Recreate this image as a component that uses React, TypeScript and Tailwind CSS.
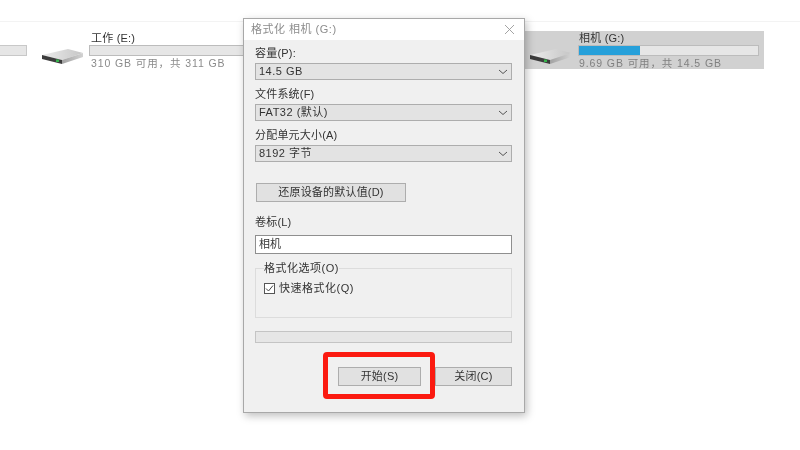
const sans = "font-['Liberation_Sans','Noto_Sans_CJK_SC',sans-serif]";

function DriveIcon() {
  return (
    <svg width="42" height="16" viewBox="0 0 42 16" className="shrink-0">
      <defs>
        <linearGradient id="top" x1="0" y1="0" x2="1" y2="0">
          <stop offset="0" stopColor="#ececec" />
          <stop offset="1" stopColor="#c6c6c6" />
        </linearGradient>
        <linearGradient id="side" x1="0" y1="0" x2="1" y2="0">
          <stop offset="0" stopColor="#a2a2a2" />
          <stop offset="1" stopColor="#d2d2d2" />
        </linearGradient>
      </defs>
      <polygon points="0,6 26,0 41,4 20,11" fill="url(#top)" />
      <polygon points="20,11 41,4 41,8 20,15" fill="url(#side)" />
      <polygon points="0,6 20,11 20,15 0,10" fill="#3c3c3c" />
      <rect x="14" y="10.5" width="3" height="2.5" fill="#35b34a" />
    </svg>
  );
}

function UsageBar({ width, percent }: { width: string; percent: number }) {
  return (
    <div className={`${width} h-[11px] border border-[#bcbcbc] bg-[#e6e6e6]`}>
      <div className="h-full bg-[#26a0da]" style={{ width: `${percent}%` }} />
    </div>
  );
}

function Combo({ label, value }: { label: string; value: string }) {
  return (
    <div className="flex flex-col">
      <div className="h-[18px] text-[11px] leading-[17px] tracking-[0.2px] text-[#333]">{label}</div>
      <div className="flex h-[17px] items-center justify-between border border-[#adadad] bg-[#e3e3e3] pl-[3px] pr-[3px] text-[11px] tracking-[0.5px] text-[#333]">
        <span>{value}</span>
        <svg width="10" height="6" viewBox="0 0 10 6" fill="none" stroke="#555" strokeWidth="1">
          <path d="M1 1l4 3.5L9 1" />
        </svg>
      </div>
    </div>
  );
}

function PushButton({ className, children }: { className: string; children: string }) {
  return (
    <div className={`flex h-[19px] items-center justify-center border border-[#adadad] bg-[#e1e1e1] text-[11px] tracking-[0.2px] text-[#333] ${className}`}>
      {children}
    </div>
  );
}

function FormatDialog() {
  return (
    <div className="absolute left-[243px] top-[18px] flex h-[395px] w-[282px] flex-col border border-[#a8a8a8] bg-[#f0f0f0] shadow-[2px_3px_8px_rgba(0,0,0,0.25)]">
      <div className="flex h-[21px] shrink-0 items-center justify-between bg-white pl-[7px] pr-[9px] text-[11px] tracking-[0.5px] text-[#8c8c8c]">
        <span>格式化 相机 (G:)</span>
        <svg width="11" height="11" viewBox="0 0 11 11" fill="none" stroke="#9a9a9a" strokeWidth="0.9">
          <path d="M1 1l9 9M10 1l-9 9" />
        </svg>
      </div>
      <div className="flex flex-col pl-[11px] pr-[12px] pt-[5px]">
        <div className="flex flex-col gap-[6px]">
          <Combo label="容量(P):" value="14.5 GB" />
          <Combo label="文件系统(F)" value="FAT32 (默认)" />
          <Combo label="分配单元大小(A)" value="8192 字节" />
        </div>
        <PushButton className="ml-px mt-[21px] w-[150px]">还原设备的默认值(D)</PushButton>
        <div className="mt-[12px] h-[17px] text-[11px] leading-[17px] tracking-[0.2px] text-[#333]">卷标(L)</div>
        <div className="mt-[4px] flex h-[19px] items-center border border-[#8f8f8f] bg-white pl-[3px] text-[11px] text-[#333]">相机</div>
        <fieldset className="mt-[8px] h-[56px] border border-[#dcdcdc] pl-[8px]">
          <legend className="text-[11px] leading-[13px] tracking-[0.5px] text-[#333]">格式化选项(O)</legend>
          <label className="mt-[5px] flex items-center gap-[4px] text-[11px] tracking-[0.5px] text-[#333]">
            <span className="flex h-[11px] w-[11px] items-center justify-center border border-[#555] bg-white">
              <svg width="9" height="9" viewBox="0 0 9 9" fill="none" stroke="#444" strokeWidth="1">
                <path d="M1 4.5l2.5 2.5L8 1.5" />
              </svg>
            </span>
            快速格式化(Q)
          </label>
        </fieldset>
        <div className="mt-[13px] h-[12px] border border-[#c4c4c4] bg-[#e6e6e6]" />
        <div className="mt-[24px] flex justify-end gap-[14px]">
          <PushButton className="w-[83px]">开始(S)</PushButton>
          <PushButton className="w-[77px]">关闭(C)</PushButton>
        </div>
      </div>
    </div>
  );
}

export default function App() {
  return (
    <div className={`relative h-[450px] w-[800px] overflow-hidden bg-white blur-[0.3px] ${sans}`}>
      <div className="h-[22px] border-b border-[#f3f3f3]" />
      <div className="flex pt-[9px]">
        <div className="w-[42px] pt-[14px]">
          <div className="h-[11px] w-[27px] border border-l-0 border-[#c8c8c8] bg-[#e6e6e6]" />
        </div>
        <div className="flex h-[38px] w-[483px] gap-[5px]">
          <div className="pt-[18px]">
            <DriveIcon />
          </div>
          <div className="flex flex-1 flex-col">
            <div className="h-[14px] pl-[2px] text-[11px] leading-[14px] tracking-[0.2px] text-[#333]">工作 (E:)</div>
            <UsageBar width="w-full" percent={0} />
            <div className="pl-[2px] pt-[1px] text-[10.5px] leading-[12px] tracking-[0.9px] text-[#8a8a8a]">310 GB 可用，共 311 GB</div>
          </div>
        </div>
        <div className="flex h-[38px] w-[239px] gap-[6px] bg-[#d1d1d1] pl-[5px]">
          <div className="pt-[18px]">
            <DriveIcon />
          </div>
          <div className="flex flex-col">
            <div className="h-[14px] pl-px text-[11px] leading-[14px] tracking-[0.2px] text-[#333]">相机 (G:)</div>
            <UsageBar width="w-[181px]" percent={34} />
            <div className="pl-px pt-[1px] text-[10.5px] leading-[12px] tracking-[0.9px] text-[#808080]">9.69 GB 可用，共 14.5 GB</div>
          </div>
        </div>
      </div>
      <FormatDialog />
      <div className="absolute left-[323px] top-[352px] h-[47px] w-[112px] rounded-[4px] border-[5px] border-[#fb1a10]" />
    </div>
  );
}
